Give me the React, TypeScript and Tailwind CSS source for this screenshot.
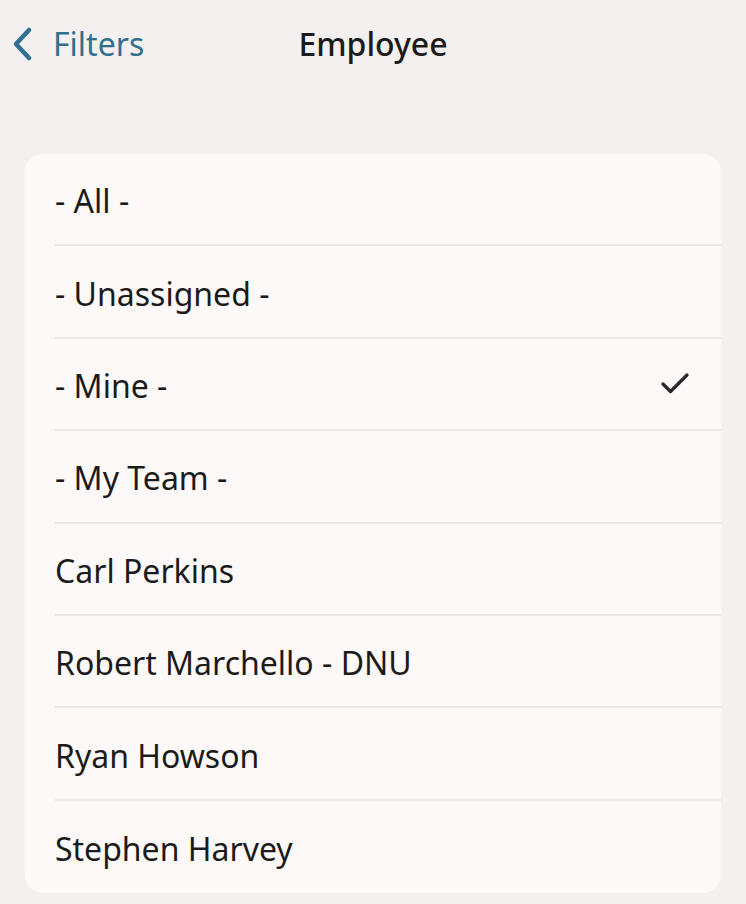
import { Check } from 'lucide-react'

const items = [
  { label: '- All -' },
  { label: '- Unassigned -' },
  { label: '- Mine -', selected: true },
  { label: '- My Team -' },
  { label: 'Carl Perkins' },
  { label: 'Robert Marchello - DNU' },
  { label: 'Ryan Howson' },
  { label: 'Stephen Harvey' },
]

export default function App() {
  return (
    <div className="min-h-[904px] w-[746px] bg-[#f3f0ef] font-['Noto_Sans',sans-serif] text-[#1c1b1b]">
      {/* header */}
      <div className="relative flex h-[88px] items-center">
        <button className="flex items-center pl-[10px] text-[#31708f]">
          <svg width="26" height="36" viewBox="0 0 26 36" fill="none">
            <path d="M19 4L6 18l13 14" stroke="currentColor" strokeWidth="4.5" strokeLinecap="round" strokeLinejoin="round" />
          </svg>
          <span className="ml-[17px] text-[32px]">Filters</span>
        </button>
        <h1 className="absolute left-1/2 -translate-x-1/2 text-[32px] font-medium">Employee</h1>
      </div>

      <div className="px-[25px] pt-[66px]">
        <ul className="overflow-hidden rounded-[18px] bg-[#fdf9f9] pl-[30px]">
          {items.map((item, i) => (
            <li
              key={i}
              className={
                'flex h-[92.4px] items-center justify-between pr-[28px] pt-[4px] ' +
                (i < items.length - 1 ? 'border-b-2 border-[#ebe7e7]' : '')
              }
            >
              <span className="text-[32px]">{item.label}</span>
              {item.selected && <Check size={36} strokeWidth={2.2} className="-mt-[4px] text-[#2a2929]" />}
            </li>
          ))}
        </ul>
      </div>
    </div>
  )
}
